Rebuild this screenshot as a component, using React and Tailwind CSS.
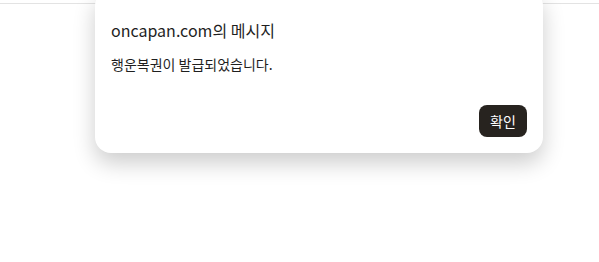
export default function App() {
  return (
    <div className="relative h-[262px] w-[599px] overflow-hidden bg-white font-['Noto_Sans_CJK_KR','Noto_Sans',sans-serif]">
      <div className="absolute left-0 right-0 top-[3px] h-px bg-[#e3e3e3]" />
      <div className="absolute left-[95px] top-[-10px] flex h-[163px] w-[448px] flex-col rounded-2xl bg-white px-4 pb-4 pt-[30px] shadow-[0_10px_22px_rgba(0,0,0,0.2)]">
        <h1 className="text-[16px] leading-[20px] text-[#1f1f1f]">oncapan.com의 메시지</h1>
        <p className="mt-[15px] text-[14px] leading-[18px] text-[#1f1f1f]">행운복권이 발급되었습니다.</p>
        <div className="mt-auto flex justify-end">
          <button className="h-8 w-12 rounded-lg bg-[#27231f] text-[14px] text-white">확인</button>
        </div>
      </div>
    </div>
  );
}
